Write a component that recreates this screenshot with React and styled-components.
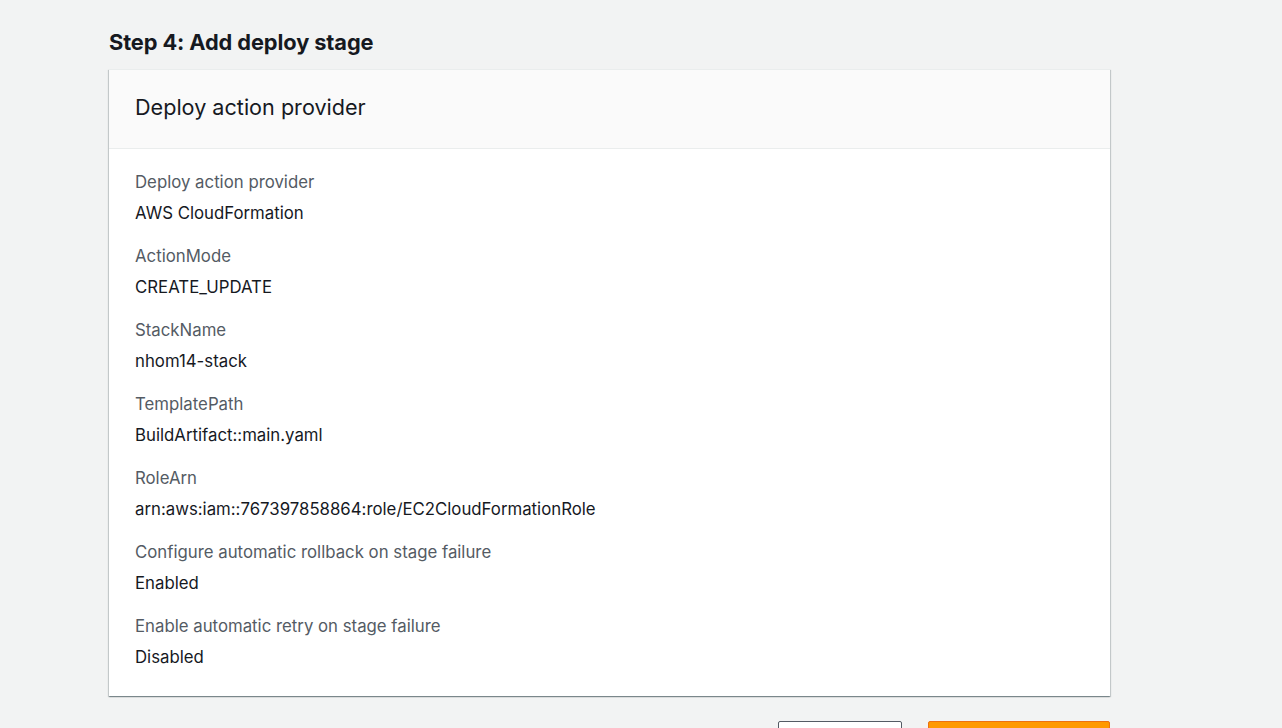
import React from "react";
import styled, { createGlobalStyle } from "styled-components";

const GlobalStyle = createGlobalStyle`
	body {
		margin: 0;
		background: #f2f3f3;
		font-family: Inter, "Noto Sans", sans-serif;
		color: #16191f;
	}
`;

const fields = [
	{ label: "Deploy action provider", value: "AWS CloudFormation" },
	{ label: "ActionMode", value: "CREATE_UPDATE" },
	{ label: "StackName", value: "nhom14-stack" },
	{ label: "TemplatePath", value: "BuildArtifact::main.yaml" },
	{ label: "RoleArn", value: "arn:aws:iam::767397858864:role/EC2CloudFormationRole" },
	{ label: "Configure automatic rollback on stage failure", value: "Enabled" },
	{ label: "Enable automatic retry on stage failure", value: "Disabled" },
];

const App = () => {
	return (
		<>
			<GlobalStyle />
			<Page>
				<StepTitle>Step 4: Add deploy stage</StepTitle>
				<Card>
					<CardHeader>
						<h2>Deploy action provider</h2>
					</CardHeader>
					<CardBody>
						{fields.map((f) => (
							<Field key={f.label}>
								<Label>{f.label}</Label>
								<Value>{f.value}</Value>
							</Field>
						))}
					</CardBody>
				</Card>
				<Actions>
					<Button>Previous</Button>
					<Button primary>Create pipeline</Button>
				</Actions>
			</Page>
		</>
	);
};

const Page = styled.div`
	width: 1001px;
	margin-left: 109px;
	padding-top: 28px;
`;

const StepTitle = styled.h1`
	margin: 0 0 13px;
	font-size: 21.8px;
	line-height: 28px;
	font-weight: 700;
	letter-spacing: -0.1px;
	color: #16191f;
`;

const Card = styled.div`
	background: white;
	border-top: 1px solid #eaeded;
	box-shadow: 0 1px 1px 0 rgba(0, 28, 36, 0.3),
		1px 1px 1px 0 rgba(0, 28, 36, 0.15),
		-1px 1px 1px 0 rgba(0, 28, 36, 0.15);
`;

const CardHeader = styled.div`
	background: #fafafa;
	border-bottom: 1px solid #eaeded;
	padding: 23px 26px 27px;

	h2 {
		margin: 0;
		font-size: 21.6px;
		line-height: 28px;
		font-weight: 400;
		color: #16191f;
	}
`;

const CardBody = styled.div`
	display: flex;
	flex-direction: column;
	gap: 21px;
	padding: 22px 26px 28px;
`;

const Field = styled.div`
	display: flex;
	flex-direction: column;
	gap: 9px;
`;

const Label = styled.div`
	font-size: 16.8px;
	line-height: 22px;
	color: #545b64;
`;

const Value = styled.div`
	font-size: 16.8px;
	line-height: 22px;
	color: #16191f;
`;

const Actions = styled.div`
	display: flex;
	justify-content: flex-end;
	gap: 26px;
	margin-top: 25px;
`;

const Button = styled.button`
	height: 32px;
	padding: 0 20px;
	min-width: ${(p) => (p.primary ? "182px" : "124px")};
	border-radius: 2px;
	border: 1px solid ${(p) => (p.primary ? "#ec7211" : "#545b64")};
	background: ${(p) => (p.primary ? "#ff9900" : "white")};
	color: ${(p) => (p.primary ? "#16191f" : "#545b64")};
	font-family: inherit;
	font-size: 14px;
	font-weight: 700;
`;

export default App;
